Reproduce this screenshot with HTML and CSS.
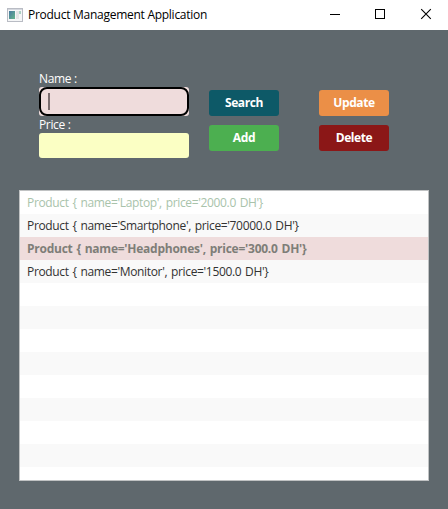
FILE: index.html
```html
<!DOCTYPE html>
<html lang="en">
<head>
<meta charset="utf-8">
<title>Product Management Application</title>
<link rel="stylesheet" href="styles.css">
</head>
<body>
<header class="titlebar">
  <svg class="app-icon" width="16" height="14" viewBox="0 0 16 14">
    <defs><linearGradient id="pane" x1="0" y1="0" x2="1" y2="1"><stop offset="0" stop-color="#4779a0"/><stop offset="1" stop-color="#65b58b"/></linearGradient></defs>
    <rect x=".5" y=".5" width="15" height="13" fill="#f5f6f7" stroke="#b9bcc4"/>
    <path d="M1 1.5h14" stroke="#d5d8df"/>
    <rect x="2" y="3" width="6" height="8" fill="url(#pane)"/>
    <rect x="9" y="3" width="3" height="8" fill="#e3e4e5"/>
    <rect x="12" y="3" width="2" height="3" fill="#a9d2c3"/>
  </svg>
  <h1 class="title">Product Management Application</h1>
  <svg class="controls" width="138" height="30" viewBox="0 0 138 30" fill="none" stroke="#000">
    <path d="M20 14.5h10"/>
    <rect x="65.500" y="9.500" width="9" height="9"/>
    <path d="M111.200 9.200l9.600 9.600M120.800 9.200l-9.600 9.600" stroke-width="1.100"/>
  </svg>
</header>
<main class="content">
  <section class="form">
    <div class="fields">
      <label class="label">Name :</label>
      <div class="field field-focused"><div class="ring"><span class="caret"></span></div></div>
      <label class="label">Price :</label>
      <div class="field field-price"></div>
    </div>
    <div class="buttons">
      <button class="btn search">Search</button>
      <button class="btn update">Update</button>
      <button class="btn add">Add</button>
      <button class="btn delete">Delete</button>
    </div>
  </section>
  <ul class="list">
    <li class="row muted">Product { name='Laptop', price='2000.0 DH'}</li>
    <li class="row">Product { name='Smartphone', price='70000.0 DH'}</li>
    <li class="row selected">Product { name='Headphones', price='300.0 DH'}</li>
    <li class="row">Product { name='Monitor', price='1500.0 DH'}</li>
    <li class="row"></li><li class="row"></li><li class="row"></li><li class="row"></li>
    <li class="row"></li><li class="row"></li><li class="row"></li><li class="row"></li><li class="row"></li>
  </ul>
</main>
</body>
</html>
```
FILE: styles.css
```css
* { box-sizing: border-box; }
body {
  margin: 0;
  width: 448px;
  height: 509px;
  overflow: hidden;
  display: flex;
  flex-direction: column;
  background: #5f686d;
  font: 12px "Open Sans", "Noto Sans", sans-serif;
}
.titlebar {
  height: 30px;
  flex: none;
  display: flex;
  align-items: center;
  background: #fff;
  padding-left: 7px;
}
.app-icon { margin-right: 5px; flex: none; }
.title {
  margin: 0;
  font-size: 12px;
  font-weight: 400;
  line-height: 30px;
  letter-spacing: -0.27px;
  color: #000;
  white-space: nowrap;
}
.controls { margin-left: auto; flex: none; }
.content { padding: 40px 19px 0; }
.form { display: flex; height: 120px; padding-left: 20px; }
.fields { width: 150px; display: flex; flex-direction: column; }
.label { height: 17px; line-height: 18px; color: #fff; letter-spacing: -0.35px; }
.field { border-radius: 3px; }
.field-focused { height: 29px; background: #efdcdc; }
.ring {
  height: 29px;
  border: 2px solid #000;
  border-radius: 8px;
  padding: 4px 7px;
}
.caret { display: block; width: 2px; height: 17px; background: #7a6d6f; }
.field-price { height: 25px; background: #fbffc4; }
.buttons {
  display: grid;
  grid-template-columns: 70px 70px;
  grid-template-rows: 26px 26px;
  column-gap: 40px;
  row-gap: 9px;
  margin: 20px 0 0 20px;
}
.btn {
  border: 0;
  padding: 0;
  border-radius: 3px;
  font: 700 12px/26px "Open Sans", "Noto Sans", sans-serif;
  letter-spacing: -0.4px;
  color: #fff;
}
.search { background: #0d5967; }
.update { background: #eb8f47; }
.add { background: #4caf50; }
.delete { background: #8b1717; }
.list {
  list-style: none;
  margin: 0;
  padding: 0;
  height: 291px;
  overflow: hidden;
  border: 1px solid #c0c2c3;
  background: #fff;
}
.row {
  height: 23px;
  line-height: 23px;
  padding-left: 7px;
  color: #323232;
  letter-spacing: -0.34px;
  word-spacing: 1px;
  white-space: pre;
}
.row:nth-child(even) { background: #f9f9f9; }
.muted { color: #a9c3ab; }
.row.selected {
  background: #efdcdc;
  color: #7e7e78;
  font-weight: 700;
  letter-spacing: -0.25px;
}
```
